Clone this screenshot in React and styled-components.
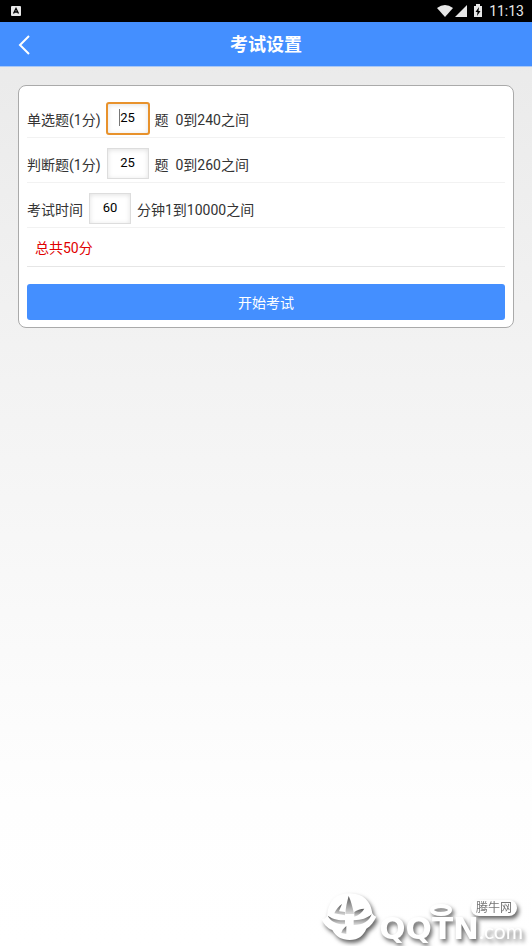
import React, { useState } from "react";
import styled, { createGlobalStyle } from "styled-components";

const GlobalStyle = createGlobalStyle`
  * {
    box-sizing: border-box;
  }
  body {
    margin: 0;
    font-family: Roboto, "Noto Sans CJK SC", sans-serif;
    font-size: 14px;
    color: #333;
  }
`;

const Page = styled.div`
  position: relative;
  min-height: 100vh;
  background: linear-gradient(#e9e9e9, #fefefe 85%, #fff);
  overflow: hidden;
`;

const StatusBar = styled.div`
  display: flex;
  align-items: center;
  justify-content: space-between;
  height: 22px;
  padding: 0 8px 0 11px;
  background: #000;
`;

const StatusIcons = styled.div`
  display: flex;
  align-items: center;
`;

const Clock = styled.span`
  margin-left: 4px;
  font-size: 14px;
  line-height: 22px;
  color: #e8e8e8;
`;

const Header = styled.header`
  display: grid;
  grid-template-columns: 48px 1fr 48px;
  align-items: center;
  height: 45px;
  background: #448fff;
  border-bottom: 1px solid #a9c8f6;
`;

const BackButton = styled.button`
  display: flex;
  align-items: center;
  justify-content: center;
  height: 44px;
  padding: 0;
  border: none;
  background: none;
  cursor: pointer;
`;

const Title = styled.h1`
  margin: 0;
  font-size: 18px;
  font-weight: 700;
  line-height: 46px;
  text-align: center;
  color: #fff;
`;

const Card = styled.form`
  margin: 18px 18px 0;
  padding: 7px 8px;
  border: 1px solid #aaa;
  border-radius: 8px;
  background: #fff;
`;

const Row = styled.div`
  display: flex;
  align-items: flex-start;
  gap: 6px;
  height: 45px;
  padding-top: 10px;
  border-bottom: 1px solid #f2f2f2;
`;

const Label = styled.label`
  line-height: 34px;
`;

const Hint = styled.span`
  line-height: 34px;
  white-space: pre;
`;

const Field = styled.span`
  position: relative;
  display: flex;
`;

const NumberInput = styled.input`
  width: 42px;
  height: 31px;
  padding: 0 0 2px;
  border: 1px solid #ddd;
  border-radius: ${props => (props.$active ? "2px" : "0")};
  background: #fff;
  box-shadow: inset 0 1px 5px rgba(0, 0, 0, 0.12);
  outline: ${props => (props.$active ? "2px solid #e8922c" : "none")};
  outline-offset: -1px;
  font-family: inherit;
  font-size: 13px;
  text-align: center;
  color: #000;
`;

const Caret = styled.span`
  position: absolute;
  top: 6px;
  left: 12px;
  width: 1px;
  height: 17px;
  background: #777;
`;

const Total = styled.div`
  height: 39px;
  padding-left: 8px;
  border-bottom: 1px solid #e6e6e6;
  line-height: 40px;
  color: #e00000;
`;

const StartButton = styled.button`
  display: block;
  width: 100%;
  height: 36px;
  margin-top: 17px;
  padding: 0;
  border: none;
  border-radius: 3px;
  background: #448fff;
  font-family: inherit;
  font-size: 14px;
  color: #fff;
  cursor: pointer;
`;

const Watermark = styled.div`
  position: absolute;
  right: 9px;
  bottom: 0;
  display: flex;
  align-items: flex-end;
  color: #fff;
  filter: drop-shadow(2px 3px 2px rgba(0, 0, 0, 0.6));
`;

const BrandMain = styled.span`
  display: flex;
  flex-direction: column;
  align-items: flex-end;
`;

const Horns = styled.svg`
  margin-bottom: -6px;
`;

const Brand = styled.span`
  font-family: "DejaVu Sans", sans-serif;
  font-size: 31px;
  font-weight: 700;
  line-height: 36px;
`;

const Badge = styled.span`
  position: absolute;
  right: 6px;
  bottom: 30px;
  padding: 0 5px;
  border-radius: 8px;
  background: #fff;
  font-size: 12px;
  line-height: 16px;
  color: #777;
`;

const Domain = styled.span`
  font-family: Lato, sans-serif;
  font-size: 21px;
  line-height: 30px;
`;

const questions = [
  { id: "single", label: "单选题(1分)", hint: "题  0到240之间", active: true },
  { id: "judge", label: "判断题(1分)", hint: "题  0到260之间" },
  { id: "minutes", label: "考试时间", hint: "分钟1到10000之间" }
];

function StatusBarIcons() {
  return (
    <svg width="48" height="16" viewBox="0 0 48 16" fill="#e8e8e8">
      <path d="M0 5Q8 -1 16 5L8 14Z" />
      <path d="M30 2V14H18Z" />
      <path d="M37 3h2V1h4v2h2v11h-8Z" />
      <path d="M42 4l-3.500 5h2l-.5 4 3.500-5h-2Z" fill="#000" />
    </svg>
  );
}

function BullLogo() {
  return (
    <svg width="60" height="58" viewBox="0 0 180 174">
      <defs>
        <linearGradient id="shade" x1="0" y1="0" x2="0" y2="1">
          <stop offset="0" stopColor="#555" />
          <stop offset="1" stopColor="#ddd" />
        </linearGradient>
      </defs>
      <path
        fill="#fff"
        d="M24 84C27 40 50 16 92 16s64 26 68 60c4 8 8 8 12 10-8 16-16 28-30 36-8 20-24 34-50 34-24 0-42-10-52-30C24 120 12 106 8 92c8 2 12-2 16-8Z"
      />
      <g fill="url(#shade)">
        <path d="M89 24C84 42 80 58 79 78h26C101 58 96 40 89 24Z" />
        <path d="M69 48C60 54 51 64 46 76l32 6V72l-18-2Z" />
        <path d="M136 62c-12 0-22 4-30 10v14c13-4 23-12 30-24Z" />
        <path d="M26 83c18 12 34 14 52 14v12C52 110 36 100 26 83Z" />
        <path d="M104 97c24-1 40-6 54-18-8 22-26 32-54 32Z" />
        <path d="M82 114c-8 7-13 13-15 21l15 3Z" />
      </g>
    </svg>
  );
}

function App() {
  const [values, setValues] = useState({
    single: "25",
    judge: "25",
    minutes: "60"
  });
  const total = Number(values.single) + Number(values.judge);

  return (
    <Page>
      <GlobalStyle />
      <StatusBar>
        <svg width="10" height="10" viewBox="0 0 10 10">
          <rect width="10" height="10" rx="1" fill="#e8e8e8" />
          <path
            d="M2.500 7.500 5 2.500 7.500 7.500M3.500 6h3"
            fill="none"
            stroke="#000"
            strokeWidth="1.300"
          />
        </svg>
        <StatusIcons>
          <StatusBarIcons />
          <Clock>11:13</Clock>
        </StatusIcons>
      </StatusBar>
      <Header>
        <BackButton type="button" aria-label="返回">
          <svg width="12" height="20" viewBox="0 0 12 20">
            <path d="M11 1 2 10l9 9" fill="none" stroke="#fff" strokeWidth="2" />
          </svg>
        </BackButton>
        <Title>考试设置</Title>
      </Header>
      <Card onSubmit={e => e.preventDefault()}>
        {questions.map(({ id, label, hint, active }) => (
          <Row key={id}>
            <Label htmlFor={id}>{label}</Label>
            <Field>
              <NumberInput
                id={id}
                $active={active}
                inputMode="numeric"
                value={values[id]}
                onChange={e => setValues({ ...values, [id]: e.target.value })}
              />
              {active && <Caret />}
            </Field>
            <Hint>{hint}</Hint>
          </Row>
        ))}
        <Total>总共{total}分</Total>
        <StartButton type="submit">开始考试</StartButton>
      </Card>
      <Watermark>
        <BullLogo />
        <BrandMain>
          <Horns width="50" height="12" viewBox="0 0 50 12">
            <ellipse
              cx="12"
              cy="6"
              rx="9"
              ry="4"
              fill="none"
              stroke="#fff"
              strokeWidth="4"
            />
          </Horns>
          <Brand>QQTN</Brand>
        </BrandMain>
        <Domain>.com</Domain>
        <Badge>腾牛网</Badge>
      </Watermark>
    </Page>
  );
}

export default App;
